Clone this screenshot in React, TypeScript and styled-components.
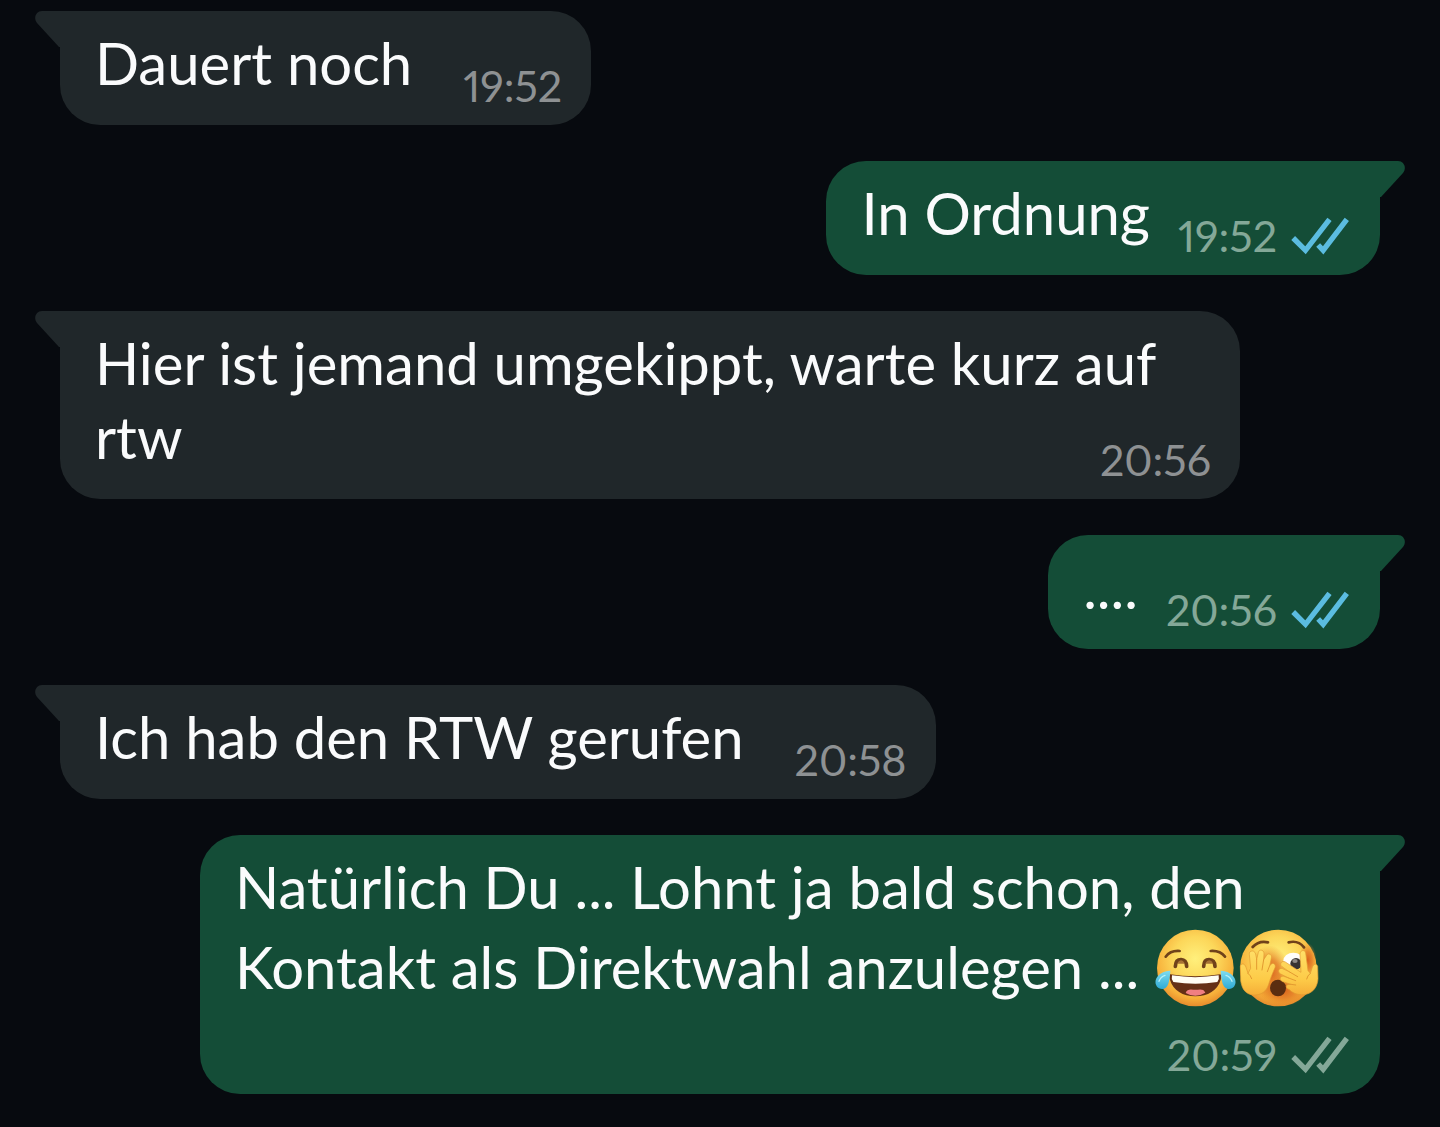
import React from 'react';
import styled, { createGlobalStyle } from 'styled-components';

type Side = 'in' | 'out';

const colors = {
  page: '#070a0f',
  in: '#20272a',
  out: '#144d37',
  text: '#fafbfc',
  inTime: '#8e9193',
  outTime: '#84a898',
  read: '#5bbce0',
};

const GlobalStyle = createGlobalStyle`
  * { box-sizing: border-box; }
  body {
    margin: 0;
    background: ${colors.page};
    font-family: Lato, "Open Sans", sans-serif;
  }
`;

const Chat = styled.ul`
  display: flex;
  flex-direction: column;
  gap: 36px;
  min-height: 100vh;
  margin: 0;
  padding: 11px 60px 32px;
  list-style: none;
`;

const Bubble = styled.li<{ $side: Side }>`
  position: relative;
  display: flow-root;
  max-width: 1180px;
  padding: 15px ${(p) => (p.$side === 'in' ? 29 : 31)}px 13px 35px;
  color: ${colors.text};
  background: ${(p) => colors[p.$side]};
  align-self: ${(p) => (p.$side === 'in' ? 'flex-start' : 'flex-end')};
  border-radius: ${(p) => (p.$side === 'in' ? '0 40px 40px 40px' : '40px 0 40px 40px')};
  font-size: 58px;
  line-height: 74px;
`;

const Tail = styled.svg<{ $side: Side }>`
  position: absolute;
  top: 0;
  width: 25px;
  height: 36px;
  fill: ${(p) => colors[p.$side]};
  ${(p) => (p.$side === 'in' ? 'right: 100%;' : 'left: 100%; transform: scaleX(-1);')}
`;

/* Floats so that it shares the last line of the text, or drops below when that line is full. */
const Meta = styled.span<{ $side: Side; $ownLine: boolean }>`
  float: right;
  display: flex;
  align-items: flex-end;
  gap: 15px;
  margin-top: ${(p) => (p.$ownLine ? 22 : 34)}px;
  margin-left: ${(p) => (p.$side === 'in' ? 51 : 28)}px;
  font-size: 43px;
  line-height: 52px;
  font-variant-numeric: proportional-nums;
  color: ${(p) => (p.$side === 'in' ? colors.inTime : colors.outTime)};
`;

const CheckIcon = styled.svg<{ $read: boolean }>`
  width: 57px;
  height: 36px;
  margin-bottom: 8px;
  overflow: visible;
  fill: none;
  stroke: ${(p) => (p.$read ? colors.read : colors.outTime)};
  stroke-width: 16;
`;

const Emoji = styled.svg`
  width: 83px;
  height: 78px;
  margin-top: 5px;
  vertical-align: -18px;
`;

function Checks({ read }: { read: boolean }) {
  return (
    <CheckIcon $read={read} viewBox="426 204 170 108" role="img" aria-label={read ? 'Gelesen' : 'Zugestellt'}>
      <path d="M429 264L466 301L538 208M504 285L519 301L590 208" />
    </CheckIcon>
  );
}

function FaceGradients({ id }: { id: string }) {
  return (
    <defs>
      <radialGradient id={`${id}-face`} cx="50%" cy="38%" r="64%">
        <stop offset="0" stopColor="#fff07c" />
        <stop offset=".45" stopColor="#fcd75a" />
        <stop offset=".8" stopColor="#f7b03a" />
        <stop offset="1" stopColor="#e4852a" />
      </radialGradient>
      <linearGradient id={`${id}-tear`} x1="0" y1="0" x2="0" y2="1">
        <stop offset="0" stopColor="#7fdcf0" />
        <stop offset="1" stopColor="#2eabd6" />
      </linearGradient>
      <linearGradient id={`${id}-hand`} x1="0" y1="0" x2="0" y2="1">
        <stop offset="0" stopColor="#ffdf68" />
        <stop offset=".65" stopColor="#fdcb48" />
        <stop offset="1" stopColor="#f5ae38" />
      </linearGradient>
      <radialGradient id={`${id}-shade`}>
        <stop offset="0" stopColor="#d9601a" />
        <stop offset=".5" stopColor="#e27a26" stopOpacity=".8" />
        <stop offset="1" stopColor="#e98a25" stopOpacity="0" />
      </radialGradient>
    </defs>
  );
}

function JoyEmoji() {
  return (
    <Emoji viewBox="49 54 249 234" role="img" aria-label="Freudentränen">
      <FaceGradients id="joy" />
      <circle cx="173" cy="171" r="115" fill="url(#joy-face)" />
      <g fill="none" stroke="#70421a" strokeLinecap="round">
        <path strokeWidth="8" d="M84 137Q98 118 126 120M219 120Q247 118 262 137" />
        <path strokeWidth="11" d="M113 166Q114 146 130 146Q146 147 147 166M198 166Q199 146 214 146Q231 147 232 166" />
      </g>
      <path fill="#a87435" d="M118 158Q130 138 142 158ZM202 158Q215 138 227 158Z" />
      <path fill="#653016" d="M97 190Q172 202 248 190Q253 196 249 207C239 238 211 256 173 256C135 256 107 238 97 207Q93 196 97 190Z" />
      <path fill="#fffdf4" d="M103 193Q172 204 243 193Q246 203 239 213Q173 223 107 213Q100 203 103 193Z" />
      <path fill="#f07f82" d="M144 246C148 231 163 236 173 236C184 236 198 231 203 245Q188 254 173 254Q157 254 144 246Z" />
      <path fill="url(#joy-tear)" d="M98 179C78 180 58 190 54 208C51 223 61 235 75 234C91 232 96 213 98 179Z" />
      <path fill="url(#joy-tear)" d="M249 179C269 180 289 190 293 208C296 223 286 235 272 234C256 232 251 213 249 179Z" />
      <path fill="none" stroke="#b9f1f7" strokeWidth="4" strokeLinecap="round" d="M64 211Q69 197 82 193M283 211Q278 197 265 193" />
    </Emoji>
  );
}

function PeekEmoji() {
  return (
    <Emoji viewBox="298 54 249 234" role="img" aria-label="Durch die Finger schauen">
      <FaceGradients id="peek" />
      <circle cx="422" cy="171" r="115" fill="url(#peek-face)" />
      <ellipse cx="395" cy="185" rx="62" ry="82" fill="url(#peek-shade)" />
      <ellipse cx="435" cy="238" rx="70" ry="48" fill="url(#peek-shade)" />
      <ellipse cx="510" cy="148" rx="27" ry="52" fill="url(#peek-shade)" />
      <path fill="none" stroke="#70421a" strokeWidth="8" strokeLinecap="round" d="M345 108Q363 88 391 94M453 94Q482 87 499 109" />
      <ellipse cx="467" cy="150" rx="30" ry="25" fill="#fffefa" />
      <circle cx="475" cy="158" r="17" fill="#363332" />
      <ellipse cx="472" cy="150" rx="8" ry="6" fill="#8f8b87" />
      <ellipse cx="421" cy="231" rx="24" ry="25" fill="#5b2d10" />
      <path
        fill="url(#peek-hand)"
        stroke="#e39a30"
        strokeWidth="2"
        d="M308 166C310 155 322 157 325 169L331 187L339 172L335 130C334 117 351 116 354 129L357 145L362 124C365 113 380 116 379 129L378 146L386 134C391 124 405 130 401 142L396 164L400 160C406 153 416 160 412 170C404 188 398 203 393 220C386 242 370 253 348 252C324 250 313 235 309 209Z"
      />
      <path fill="none" stroke="#e39a30" strokeWidth="3" strokeLinecap="round" d="M357 145L357 175M378 146L373 177M396 164L389 182M331 187Q339 193 342 203" />
      <path
        fill="url(#peek-hand)"
        stroke="#e39a30"
        strokeWidth="2"
        d="M540 166C536 155 527 159 524 169L518 187L511 179L504 126C501 114 486 118 487 130L490 184L443 153C432 147 424 160 433 167L456 183L435 173C423 169 418 183 429 189L453 201L438 196C426 194 424 208 435 212L460 220L451 221C443 223 445 233 454 235C466 248 485 254 505 250C529 244 540 224 541 203Z"
      />
      <path fill="none" stroke="#e39a30" strokeWidth="3" strokeLinecap="round" d="M456 183L480 197M453 201L474 209M460 220L474 222M518 187Q509 194 507 204" />
    </Emoji>
  );
}

interface MessageProps {
  side: Side;
  time: string;
  timeBelow?: boolean;
  read?: boolean;
  children: React.ReactNode;
}

function Message({ side, time, timeBelow = false, read = false, children }: MessageProps) {
  return (
    <Bubble $side={side}>
      <Tail $side={side} viewBox="0 0 25 36" aria-hidden="true">
        <path d="M25 0H7C1 0 -2 7 2 12L24 36H25Z" />
      </Tail>
      {children}
      <Meta $side={side} $ownLine={timeBelow}>
        <time dateTime={time}>{time}</time>
        {side === 'out' && <Checks read={read} />}
      </Meta>
    </Bubble>
  );
}

export default function App() {
  return (
    <>
      <GlobalStyle />
      <Chat>
        <Message side="in" time="19:52">Dauert noch</Message>
        <Message side="out" time="19:52" read>In Ordnung</Message>
        <Message side="in" time="20:56">Hier ist jemand umgekippt, warte kurz auf rtw</Message>
        <Message side="out" time="20:56" read>....</Message>
        <Message side="in" time="20:58">Ich hab den RTW gerufen</Message>
        <Message side="out" time="20:59" timeBelow>
          Natürlich Du ... Lohnt ja bald schon, den Kontakt als Direktwahl anzulegen ...{' '}
          <JoyEmoji />
          <PeekEmoji />
        </Message>
      </Chat>
    </>
  );
}
